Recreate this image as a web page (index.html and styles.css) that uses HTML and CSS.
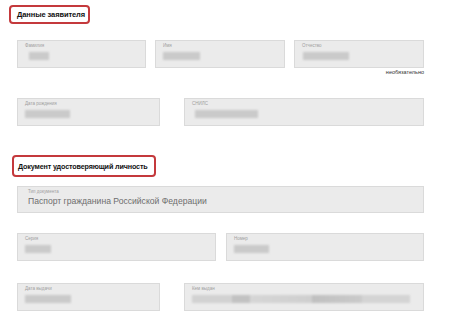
FILE: index.html
```html
<!DOCTYPE html>
<html lang="ru">
<head>
<meta charset="utf-8">
<title>Данные заявителя</title>
<link rel="stylesheet" href="styles.css">
</head>
<body>
<div class="page">
  <div class="heading h1"><span>Данные заявителя</span></div>

  <div class="row row-3 r1">
    <div class="field"><div class="label">Фамилия</div><div class="blur" style="width:20px;margin-left:4px"></div></div>
    <div class="field"><div class="label">Имя</div><div class="blur" style="width:37px"></div></div>
    <div class="field"><div class="label">Отчество</div><div class="blur" style="width:46px;margin-left:1px"></div></div>
  </div>
  <div class="hint">необязательно</div>

  <div class="row row-2a r2">
    <div class="field"><div class="label">Дата рождения</div><div class="blur" style="width:45px"></div></div>
    <div class="field"><div class="label">СНИЛС</div><div class="blur" style="width:63px;margin-left:3px"></div></div>
  </div>

  <div class="heading h2"><span>Документ удостоверяющий личность</span></div>

  <div class="row r3">
    <div class="field wide"><div class="label">Тип документа</div><div class="value">Паспорт гражданина Российской Федерации</div></div>
  </div>

  <div class="row row-2b r4">
    <div class="field"><div class="label">Серия</div><div class="blur" style="width:26px"></div></div>
    <div class="field"><div class="label">Номер</div><div class="blur" style="width:35px"></div></div>
  </div>

  <div class="row row-2a r5">
    <div class="field"><div class="label">Дата выдачи</div><div class="blur" style="width:46px"></div></div>
    <div class="field"><div class="label">Кем выдан</div><div class="blur long" style="width:218px"></div></div>
  </div>
</div>
</body>
</html>
```
FILE: styles.css
```css
html, body {
  margin: 0;
  padding: 0;
  background: #ffffff;
}
body {
  font-family: "Liberation Sans", Arial, sans-serif;
  color: #111;
  width: 451px;
  height: 320px;
  overflow: hidden;
}
.page {
  display: flex;
  flex-direction: column;
  align-items: flex-start;
  padding-top: 5px;
  padding-left: 9px;
}
.heading {
  box-sizing: border-box;
  border: 2px solid #c4393c;
  border-radius: 4px;
  display: flex;
  align-items: center;
  font-weight: bold;
  font-size: 7.5px;
  letter-spacing: -0.1px;
  white-space: nowrap;
  color: #111;
}
.h1 {
  width: 81px;
  height: 19px;
  padding-left: 6px;
}
.h2 {
  width: 144px;
  height: 22px;
  margin-left: 3px;
  margin-top: 29px;
  padding-left: 4px;
  font-size: 7.2px;
  letter-spacing: -0.15px;
}
.row {
  display: flex;
  margin-left: 8px;
  width: 407px;
}
.r1 { margin-top: 16px; gap: 9px; }
.row-3 .field:nth-child(1) { width: 129px; }
.row-3 .field:nth-child(2) { width: 130px; }
.row-3 .field:nth-child(3) { width: 130px; }
.row-2a { gap: 24px; }
.row-2a .field:nth-child(1) { width: 143px; }
.row-2a .field:nth-child(2) { width: 240px; }
.r2 { margin-top: 22px; }
.r3 { margin-top: 9px; }
.r4 { margin-top: 20px; gap: 10px; }
.row-2b .field:nth-child(1) { width: 199px; }
.row-2b .field:nth-child(2) { width: 198px; }
.r5 { margin-top: 22px; }
.field {
  box-sizing: border-box;
  height: 28px;
  background: #ebebeb;
  border: 1px solid #dadada;
  padding: 2px 6px 0 7px;
  display: flex;
  flex-direction: column;
}
.field.wide {
  width: 407px;
  height: 27px;
  padding-left: 10px;
}
.label {
  font-size: 4.5px;
  line-height: 6px;
  color: #a0a0a0;
}
.blur {
  height: 8px;
  margin-top: 3px;
  background: #cacaca;
  filter: blur(1.3px);
}
.blur.long {
  background: linear-gradient(90deg, #d2d2d2 0, #d2d2d2 40px, #c2c2c2 40px, #c2c2c2 58px, #d6d6d6 58px, #cfcfcf 120px, #c0c0c0 120px, #cacaca 170px, #d4d4d4 170px);
  margin-left: 0;
}
.value {
  font-size: 8.6px;
  line-height: 12px;
  color: #6e6e6e;
  margin-top: 0;
}
.hint {
  align-self: flex-start;
  width: 415px;
  text-align: right;
  font-size: 5.5px;
  line-height: 7px;
  color: #333;
  margin-top: 1px;
}
```
